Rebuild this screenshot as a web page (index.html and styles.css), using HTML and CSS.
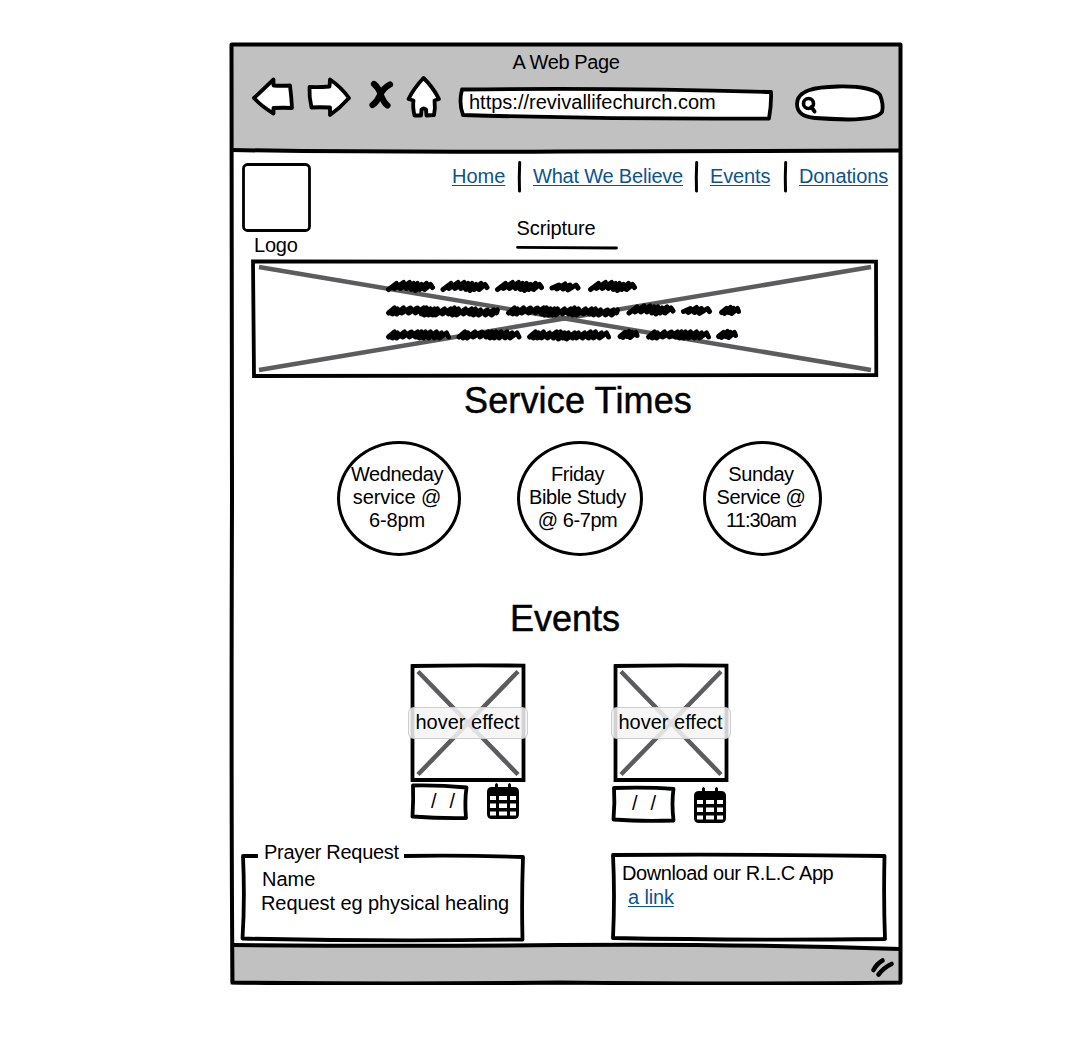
FILE: index.html
```html
<!DOCTYPE html>
<html lang="en">
<head>
<meta charset="utf-8">
<title>A Web Page</title>
<link rel="stylesheet" href="styles.css">
</head>
<body>
<div class="window">
  <header class="chrome">
    <div class="chrome-title">A Web Page</div>
    <div class="toolbar">
      <svg class="icon back" viewBox="250 75 46 42"><path d="M254 98 273.500 79.500V85.500Q282 86 290 85.500Q291.500 98 292 108Q284 107.500 273.500 108V113.500Q261 106 254 98Z"/></svg>
      <svg class="icon forward" viewBox="306 75 46 42"><path d="M309.500 87Q319 87.500 329.500 86.500L330 79.500Q341 87 349 98Q340 108 330 115V107.500Q319 107 311.500 107.500Q309 97 309.500 87Z"/></svg>
      <svg class="icon stop" viewBox="366 75 30 42"><path d="M374 84Q379 88 381 95.500Q384 103 387.500 105.500M390 84.500Q383 88 379.500 96Q377 102 372.500 105"/></svg>
      <svg class="icon home" viewBox="404 75 40 42"><path d="M423.500 78Q433 87 439 99L434.500 100.500Q435.500 108 434 115L426.500 115.500 426 109.500Q423.500 107.500 421.500 109.500L421 115.500 414.500 115.500Q412.500 107 413.500 100.500L408.500 99Q414 88 423.500 78Z"/></svg>
      <div class="address">
        <svg class="outline" viewBox="459 86 315 36"><path class="box" d="M462 89.500Q620 87.500 771 92Q771.500 105 769 118.500Q620 119.500 463 115Q458.500 103 462 89.500Z"/></svg>
        <span>https://revivallifechurch.com</span>
      </div>
      <svg class="icon search" viewBox="793 82 93 42"><path d="M797 104C797 90 815 87 838 86.500C862 86 876 90 880 95Q884 105 882 112C878 118 865 119 848 119.500Q830 119 815 118C803 117 797 112 797 104Z"/><circle class="lens" cx="808.500" cy="103.500" r="5"/><path class="handle" d="M811.500 107l3 4.500"/></svg>
    </div>
  </header>

  <main>
    <section class="masthead">
      <div class="brand">
        <svg class="logo" viewBox="242 163 69 69"><rect x="243.500" y="164.500" width="66" height="66" rx="4"/></svg>
        <span>Logo</span>
      </div>
      <div class="intro">
        <nav class="nav">
          <a class="n-home" href="#">Home</a>
          <svg class="rule" viewBox="0 0 3 32"><path d="M1.700 1.500Q1 16 1.500 30"/></svg>
          <a class="n-believe" href="#">What We Believe</a>
          <svg class="rule" viewBox="0 0 3 32"><path d="M1.700 1.500Q1 16 1.500 30"/></svg>
          <a class="n-events" href="#">Events</a>
          <svg class="rule" viewBox="0 0 3 32"><path d="M1.700 1.500Q1 16 1.500 30"/></svg>
          <a class="n-donations" href="#">Donations</a>
        </nav>
        <div class="scripture">
          <span>Scripture</span>
          <svg class="underline" viewBox="516 245 102 5"><path d="M517.500 247.300 616.500 248"/></svg>
        </div>
      </div>
    </section>

    <svg class="hero" viewBox="251 260 627 117">
      <defs>
        <path id="w20" d="m2.500 2.500l5-4-2 5l6-6-2 5l5-4-2 5l6-5 1 3"/>
        <path id="w30" d="m2.500 1.500l7-3-2 4l8-5-2 5l7-4-2 5l8-5 2 3"/>
        <path id="w46" d="m2.500 3l8-6-2 5l9-6-3 6l9-6-3 6l7-5-2 6l6-6-2 7l6-6-2 5l7-6-2 6l6-5 2 3"/>
        <path id="w62" d="m2.500 3l6-5-2 6l5-5-1 5l8-6-2 5l9-5-2 5l8-5-2 5l6-5-2 6l6-6-2 6l7-6-2 6l8-6-2 6l7-5-2 5l7-5 2 4"/>
        <path id="w83" d="m2.500 3l6-5-2 6l5-5-1 5l6-6-2 6l8-5-2 5l9-6-3 6l7-6-2 7l6-6-2 5l6-5-2 6l8-6-2 5l6-5-2 5l8-5-2 5l8-6-2 6l7-6-2 6l8-5-2 5l7-5 2 4"/>
        <path id="w112" d="m2.500 3l6-5-2 6l5-5-1 5l7-6-2 5l9-5-2 5l9-5-2 5l8-5-2 6l5-6-2 7l6-6-2 6l6-6-2 6l5-6-2 6l9-6-2 5l8-5-2 5l6-6-2 7l6-6-2 6l9-6-2 5l8-5-2 5l6-5-2 6l7-5-2 5l9-5-2 5l8-5-2 5l6-5-1 3"/>
      </defs>
      <path class="cross" d="M259 267 871 370M259 370 871 267"/>
      <path class="frame" d="M253 261.500Q560 261 876 261.700L876.300 375Q560 374.500 254 376Z"/>
      <g class="scribble">
        <use href="#w46" x="386" y="286.500"/><use href="#w46" x="440.500" y="286.500"/><use href="#w46" x="495" y="286.500"/><use href="#w30" x="549.500" y="286.500"/><use href="#w46" x="588" y="286.500"/>
        <use href="#w112" x="386" y="310"/><use href="#w112" x="506" y="310"/><use href="#w46" x="626.500" y="310"/><use href="#w30" x="681" y="310"/><use href="#w20" x="719" y="310"/>
        <use href="#w62" x="386" y="334"/><use href="#w62" x="456.500" y="334"/><use href="#w83" x="527" y="334"/><use href="#w20" x="617.500" y="334"/><use href="#w62" x="646" y="334"/><use href="#w20" x="716" y="334"/>
      </g>
    </svg>

    <h2 class="h-services">Service Times</h2>
    <section class="services">
      <div class="service wed">Wedneday<br><span class="line-wide">service @</span><br><span class="line-wide">6-8pm</span></div>
      <div class="service fri">Friday<br>Bible Study<br>@ 6-7pm</div>
      <div class="service sun">Sunday<br>Service @<br><span class="line-tight">11:30am</span></div>
    </section>

    <h2 class="h-events">Events</h2>
    <section class="events">
      <article class="event first">
        <div class="picture">
          <svg viewBox="411 664 115 118"><path class="cross" d="M418 671.500 518 774.500M518 671.500 418 774.500"/><path class="frame" d="M412.500 666Q470 664.800 523.500 665.700V780H412.500Z"/></svg>
          <span class="label">hover effect</span>
        </div>
        <div class="when">
          <div class="date">
            <svg class="outline" viewBox="411 784 57 36"><path class="box" d="M413 785.500Q440 785 466.500 787.500Q464.500 802 466 818Q440 818.500 412.500 816.500Q413.500 800 413 785.500Z"/></svg>
            <span>/</span><span>/</span>
          </div>
          <svg class="calendar" viewBox="0 0 32 36"><path d="M8 1.500q1.500-3 3 0V4h10V1.500q1.500-3 3 0V4h3q5 0 5 5v22q0 5-5 5H5q-5 0-5-5V9q0-5 5-5h3z"/><path class="cells" d="M3 13h6v4H3zM12 13h8v4h-8zM23 13h6v4h-6zM3 20.500h6v4.500H3zM12 20.500h8v4.500h-8zM23 20.500h6v4.500h-6zM3 28.500h6v4H3zM12 28.500h8v4h-8zM23 28.500h6v4h-6z"/></svg>
        </div>
      </article>
      <article class="event second">
        <div class="picture">
          <svg viewBox="411 664 115 118"><path class="cross" d="M418 671.500 518 774.500M518 671.500 418 774.500"/><path class="frame" d="M412.500 666Q470 664.800 523.500 665.700V780H412.500Z"/></svg>
          <span class="label">hover effect</span>
        </div>
        <div class="when">
          <div class="date">
            <svg class="outline" viewBox="612 786 63 36"><path class="box" d="M614 788Q650 787 673.500 789Q671.500 803 673.500 820.500Q640 821.500 613.500 819.500Q615 803 614 788Z"/></svg>
            <span>/</span><span>/</span>
          </div>
          <svg class="calendar" viewBox="0 0 32 36"><path d="M8 1.500q1.500-3 3 0V4h10V1.500q1.500-3 3 0V4h3q5 0 5 5v22q0 5-5 5H5q-5 0-5-5V9q0-5 5-5h3z"/><path class="cells" d="M3 13h6v4H3zM12 13h8v4h-8zM23 13h6v4h-6zM3 20.500h6v4.500H3zM12 20.500h8v4.500h-8zM23 20.500h6v4.500h-6zM3 28.500h6v4H3zM12 28.500h8v4h-8zM23 28.500h6v4h-6z"/></svg>
        </div>
      </article>
    </section>

    <section class="panels">
      <div class="panel prayer">
        <svg class="outline" viewBox="241 853 284 88"><path class="frame" d="M258 856H243Q245 900 242.500 938.500Q380 941.500 522.500 939.500Q521.500 900 523 857Q460 855 404 856"/></svg>
        <p class="legend">Prayer Request</p>
        <p class="name">Name</p>
        <p class="request">Request eg physical healing</p>
      </div>
      <div class="panel app">
        <svg class="outline" viewBox="611 853 276 88"><path class="frame" d="M613 855Q740 854 884.500 856Q883.500 900 885 939Q740 940.500 613 938Q615 895 613 855Z"/></svg>
        <p class="download">Download our R.L.C App</p>
        <p class="link"><a href="#">a link</a></p>
      </div>
    </section>
  </main>

  <footer class="statusbar">
    <svg class="grip" viewBox="870 956 26 22"><path d="M873.500 970Q877 963.500 882.500 960.500M878.500 974.500Q884 967.500 891.500 964"/></svg>
  </footer>

  <svg class="window-frame" viewBox="230 43 672 942">
    <path class="gap" d="M700 944H900V949Q800 946 700 945.200Z"/>
    <path d="M231.500 44.500Q560 43.500 900.500 44.500L900.500 982.500Q740 984.500 560 982.500Q400 984.500 232.500 982.500Q231 800 232 500Q231 200 231.500 44.500Z"/>
    <path d="M232 150Q380 152.500 560 151.500T900 150.500"/>
    <path d="M232 945Q400 946.500 560 945Q720 943.500 900 949"/>
  </svg>
</div>
</body>
</html>
```
FILE: styles.css
```css
* { box-sizing: border-box; }
body {
  margin: 0;
  background: #fff;
  color: #000;
  font: 20px/23px "Liberation Sans", Arial, sans-serif;
}
svg { display: block; overflow: visible; }
p, h2 { margin: 0; white-space: nowrap; }
a { color: #0b5394; text-decoration-thickness: 1px; text-underline-offset: 2px; }
.outline { position: absolute; inset: 0; width: 100%; height: 100%; z-index: -1; }
.frame, .box { fill: none; stroke: #000; stroke-width: 3.8; stroke-linejoin: round; }
.hero .frame, .picture .frame { stroke-linejoin: miter; }
.box { fill: #fff; }
.cross { fill: none; stroke: #5c5c5e; stroke-width: 4.5; }

.window {
  position: relative;
  display: flex;
  flex-direction: column;
  width: 672px;
  height: 942px;
  margin: 43px 0 0 230px;
}
.window-frame { position: absolute; inset: 0; width: 100%; height: 100%; pointer-events: none; }
.window-frame path { fill: none; stroke: #000; stroke-width: 4; stroke-linejoin: round; }
.window-frame .gap { fill: #fff; stroke: none; }

.chrome { height: 109px; padding-top: 8px; background: #c1c1c1; }
.chrome-title { text-align: center; letter-spacing: -.4px; }
.toolbar { display: flex; align-items: flex-start; padding-left: 20px; margin-top: 1px; }
.icon { height: 42px; fill: #fff; stroke: #000; stroke-width: 3.8; stroke-linejoin: round; stroke-linecap: round; }
.back { width: 46px; }
.forward { width: 46px; margin-left: 10px; }
.stop { width: 30px; margin-left: 14px; fill: none; stroke-width: 6.2; }
.home { width: 40px; margin-left: 8px; }
.address {
  position: relative;
  z-index: 0;
  width: 315px;
  height: 36px;
  margin: 11px 0 0 15px;
  padding: 5px 0 0 10px;
}
.search { width: 93px; margin: 7px 0 0 19px; }
.search .lens { stroke-width: 3.6; }
.search .handle { stroke-width: 4; }

main { height: 793px; }
.masthead { display: flex; height: 108px; padding: 11px 0 0 12px; }
.brand { width: 69px; }
.logo { width: 69px; height: 69px; }
.logo rect { fill: #fff; stroke: #000; stroke-width: 2.8; }
.brand span { display: block; margin: 2px 0 0 12px; letter-spacing: -.2px; }
.nav { display: flex; margin: -2px 0 0 141px; white-space: nowrap; }
.nav a { margin-top: 4px; }
.rule { width: 3px; height: 32px; margin-left: 13px; margin-right: 12px; }
.rule path { fill: none; stroke: #000; stroke-width: 3; stroke-linecap: round; }
.n-home { width: 53px; }
.n-believe { width: 149px; letter-spacing: -.2px; }
.n-events { width: 61px; letter-spacing: -.15px; }
.n-donations { width: 89px; letter-spacing: -.1px; }
.scripture { margin: 24px 0 0 205px; }
.scripture span { display: block; margin-left: .5px; letter-spacing: -.1px; }
.underline { width: 102px; height: 5px; margin-top: 5px; }
.underline path { stroke: #000; stroke-width: 2.8; stroke-linecap: round; }

.hero { width: 627px; height: 117px; margin-left: 21px; }
.scribble { fill: none; stroke: #000; stroke-width: 5; stroke-linecap: round; stroke-linejoin: round; }

h2 { font-size: 36px; line-height: 40px; font-weight: 400; -webkit-text-stroke: .5px #000; }
.h-services { margin: 4px 0 0 234px; letter-spacing: .15px; }
.services { display: flex; margin: 20px 0 0 107px; }
.service {
  height: 115px;
  padding-top: 19px;
  border: 3px solid #000;
  border-radius: 50%;
  text-align: center;
  white-space: nowrap;
  letter-spacing: -.4px;
}
.line-wide { letter-spacing: -.1px; }
.line-tight { letter-spacing: -.9px; }
.wed { width: 124px; padding-right: 4px; }
.fri { width: 126px; margin-left: 56px; padding-right: 5px; }
.sun { width: 119px; margin-left: 60px; padding-right: 3px; }

.h-events { margin: 43px 0 0 280px; }
.events { display: flex; gap: 88px; margin: 25px 0 0 181px; height: 160px; }
.event { width: 115px; }
.picture { position: relative; height: 118px; }
.label {
  position: absolute;
  left: -3px;
  top: 43px;
  width: 120px;
  height: 32px;
  padding-top: 3px;
  border: 1.5px solid rgba(200, 200, 200, .85);
  border-radius: 6px;
  background: rgba(245, 245, 245, .86);
  text-align: center;
  white-space: nowrap;
  text-indent: -1px;
}
.when { display: flex; margin-top: 2px; }
.date { position: relative; z-index: 0; display: flex; gap: 13px; width: 57px; height: 36px; padding: 6px 0 0 20px; }
.calendar { width: 32px; height: 36px; margin: -1px 0 0 19px; }
.calendar .cells { fill: #fff; }
.second .when { width: 116px; margin: 4px 0 0 -2px; }
.second .date { width: 63px; }
.second .calendar { margin-top: 1px; }

.panels { display: flex; gap: 86px; margin: 29px 0 0 11px; }
.panel { position: relative; z-index: 0; height: 88px; }
.prayer { width: 284px; }
.app { width: 276px; padding: 9px 0 0 11px; }
.legend { margin: -12px 0 0 23px; letter-spacing: -.3px; }
.name { margin: 4px 0 0 21px; }
.request { margin: 1px 0 0 20px; letter-spacing: -.08px; }
.download { letter-spacing: -.4px; }
.link { margin: 1px 0 0 6px; letter-spacing: -.15px; }

.statusbar { display: flex; justify-content: flex-end; height: 40px; padding: 11px 6px 0 0; background: #c1c1c1; }
.grip { width: 26px; height: 22px; fill: none; stroke: #000; stroke-width: 4.6; stroke-linecap: round; }
```
